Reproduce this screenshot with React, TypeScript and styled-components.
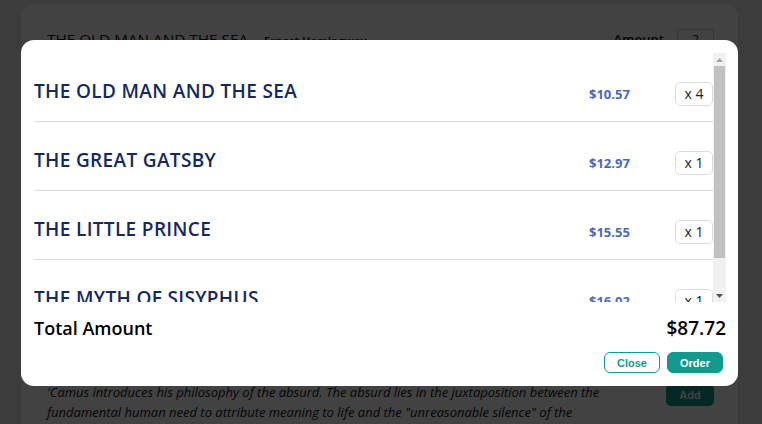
import React from 'react';
import styled, { createGlobalStyle } from 'styled-components';

const GlobalStyle = createGlobalStyle`
  html, body {
    margin: 0;
    padding: 0;
    background: #e9e9e9;
    font-family: "Open Sans", "Noto Sans", sans-serif;
  }
  * { box-sizing: border-box; }
`;

const Page = styled.div`
  width: 762px;
  height: 424px;
  overflow: hidden;
  padding: 4px 24px 0 21px;
`;

const BookCard = styled.div`
  background: #ffffff;
  border-radius: 12px;
  padding: 24px 24px 0 26px;
  height: 440px;
`;

const BookHeader = styled.div`
  display: flex;
  align-items: center;
  height: 22px;
`;

const BookTitle = styled.span`
  font-size: 15.3px;
  font-weight: 500;
  color: #111;
`;

const BookAuthor = styled.span`
  font-size: 11px;
  font-weight: 700;
  color: #222;
  margin-left: 16px;
  margin-top: 3px;
`;

const AmountLabel = styled.span`
  margin-left: auto;
  font-size: 13px;
  font-weight: 600;
  color: #111;
`;

const AmountInput = styled.div`
  width: 37px;
  height: 20px;
  margin-left: 13px;
  border: 1px solid #cfcfcf;
  border-radius: 3px;
  font-size: 13px;
  text-align: center;
  line-height: 18px;
  color: #333;
`;

const BookBody = styled.div`
  display: flex;
  align-items: flex-start;
  margin-top: 332px;
  gap: 60px;
`;

const Description = styled.p`
  margin: 0;
  font-size: 13px;
  font-style: italic;
  line-height: 20px;
  color: #111;
  width: 560px;
`;

const AddButton = styled.button`
  margin-left: auto;
  margin-top: 2px;
  width: 48px;
  height: 22px;
  border: none;
  border-radius: 5px;
  background: #139a8c;
  color: #fff;
  font-family: "Liberation Sans", Arial, sans-serif;
  font-size: 11px;
  font-weight: 700;
`;

const Overlay = styled.div`
  position: fixed;
  inset: 0;
  background: rgba(0, 0, 0, 0.74);
  display: flex;
  align-items: flex-start;
  padding: 40px 24px 0 21px;
`;

const Modal = styled.div`
  width: 717px;
  height: 346px;
  background: #fff;
  border-radius: 13px;
  padding: 13px 12px 13px 13px;
  display: flex;
  flex-direction: column;
`;

const ListFrame = styled.div`
  display: flex;
  height: 249px;
`;

const CartList = styled.div`
  flex: 1;
  overflow-y: auto;
  scrollbar-width: none;
  &::-webkit-scrollbar {
    display: none;
  }
`;

const ScrollTrack = styled.div`
  width: 13px;
  display: flex;
  flex-direction: column;
  background: #f1f1f1;
`;

const ScrollArrow = styled.div<{ $down?: boolean }>`
  height: 13px;
  display: flex;
  align-items: center;
  justify-content: center;
  margin-top: ${p => (p.$down ? 'auto' : '0')};
`;

const ScrollThumb = styled.div`
  height: 192px;
  margin: 0 1px;
  background: #c1c1c1;
`;

const CartRow = styled.div`
  display: flex;
  align-items: center;
  height: 69px;
  padding-top: 8px;
  border-bottom: 1px solid #d9d9d9;
`;

const ItemTitle = styled.span`
  flex: 1;
  font-size: 19px;
  font-weight: 600;
  color: #15295f;
  letter-spacing: 0.35px;
`;

const ItemPrice = styled.span`
  width: 86px;
  margin-top: 6px;
  font-size: 13px;
  font-weight: 700;
  color: #4868c2;
`;

const Quantity = styled.div`
  width: 38px;
  height: 24px;
  margin-top: 6px;
  border: 1px solid #dcdcdc;
  border-radius: 5px;
  font-size: 14px;
  line-height: 22px;
  text-align: center;
  color: #222;
`;

const TotalRow = styled.div`
  display: flex;
  justify-content: space-between;
  align-items: center;
  margin-top: 14px;
  height: 24px;
  color: #000;
`;

const TotalLabel = styled.span`
  font-size: 18px;
  font-weight: 600;
`;

const TotalValue = styled.span`
  font-size: 19px;
  font-weight: 600;
`;

const Actions = styled.div`
  display: flex;
  justify-content: flex-end;
  gap: 7px;
  margin-top: 12px;
  padding-right: 3px;
`;

const ActionButton = styled.button<{ $filled?: boolean }>`
  width: 56px;
  height: 21px;
  border-radius: 6px;
  border: 1px solid #139a8c;
  background: ${p => (p.$filled ? '#139a8c' : '#fff')};
  color: ${p => (p.$filled ? '#fff' : '#139a8c')};
  font-family: "Liberation Sans", Arial, sans-serif;
  font-size: 11px;
  font-weight: 700;
  padding: 0;
  cursor: pointer;
`;

const cart = [
  { title: 'THE OLD MAN AND THE SEA', price: 10.57, qty: 4 },
  { title: 'THE GREAT GATSBY', price: 12.97, qty: 1 },
  { title: 'THE LITTLE PRINCE', price: 15.55, qty: 1 },
  { title: 'THE MYTH OF SISYPHUS', price: 16.02, qty: 1 },
];

const Triangle = ({ down, color }: { down?: boolean; color: string }) => (
  <svg width="7" height="4" viewBox="0 0 7 4">
    <path d={down ? 'M0 0 L7 0 L3.5 4 Z' : 'M0 4 L7 4 L3.5 0 Z'} fill={color} />
  </svg>
);

export default function App() {
  return (
    <>
      <GlobalStyle />
      <Page>
        <BookCard>
          <BookHeader>
            <BookTitle>THE OLD MAN AND THE SEA</BookTitle>
            <BookAuthor>Ernest Hemingway</BookAuthor>
            <AmountLabel>Amount</AmountLabel>
            <AmountInput>2</AmountInput>
          </BookHeader>
          <BookBody>
            <Description>
              'Camus introduces his philosophy of the absurd. The absurd lies in the juxtaposition between the
              fundamental human need to attribute meaning to life and the "unreasonable silence" of the
              universe in response.'
            </Description>
            <AddButton>Add</AddButton>
          </BookBody>
        </BookCard>
      </Page>
      <Overlay>
        <Modal>
          <ListFrame>
            <CartList>
              {cart.map(item => (
                <CartRow key={item.title}>
                  <ItemTitle>{item.title}</ItemTitle>
                  <ItemPrice>${item.price.toFixed(2)}</ItemPrice>
                  <Quantity>x {item.qty}</Quantity>
                </CartRow>
              ))}
            </CartList>
            <ScrollTrack>
              <ScrollArrow>
                <Triangle color="#a3a3a3" />
              </ScrollArrow>
              <ScrollThumb />
              <ScrollArrow $down>
                <Triangle down color="#505050" />
              </ScrollArrow>
            </ScrollTrack>
          </ListFrame>
          <TotalRow>
            <TotalLabel>Total Amount</TotalLabel>
            <TotalValue>$87.72</TotalValue>
          </TotalRow>
          <Actions>
            <ActionButton>Close</ActionButton>
            <ActionButton $filled>Order</ActionButton>
          </Actions>
        </Modal>
      </Overlay>
    </>
  );
}
